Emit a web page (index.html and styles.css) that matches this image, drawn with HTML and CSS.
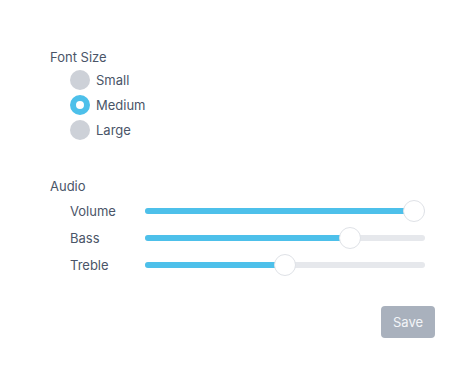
FILE: index.html
```html
<!DOCTYPE html>
<html>
<head>
<meta charset="utf-8">
<link rel="stylesheet" href="styles.css">
</head>
<body>
<div class="page">
  <section class="group">
    <div class="group-title">Font Size</div>
    <div class="radios">
      <div class="radio-row"><span class="radio"></span><span class="label">Small</span></div>
      <div class="radio-row"><span class="radio checked"></span><span class="label">Medium</span></div>
      <div class="radio-row"><span class="radio"></span><span class="label">Large</span></div>
    </div>
  </section>
  <section class="group audio">
    <div class="group-title">Audio</div>
    <div class="sliders">
      <div class="slider-row">
        <span class="slider-label">Volume</span>
        <div class="track"><div class="fill" style="width: 269px"></div><div class="thumb" style="left: 258px"></div></div>
      </div>
      <div class="slider-row">
        <span class="slider-label">Bass</span>
        <div class="track"><div class="fill" style="width: 205px"></div><div class="thumb" style="left: 194px"></div></div>
      </div>
      <div class="slider-row">
        <span class="slider-label">Treble</span>
        <div class="track"><div class="fill" style="width: 140px"></div><div class="thumb" style="left: 129px"></div></div>
      </div>
    </div>
  </section>
  <div class="actions"><button class="save">Save</button></div>
</div>
</body>
</html>
```
FILE: styles.css
```css
* { box-sizing: border-box; }
html, body { margin: 0; padding: 0; background: #fff; }
body {
  font-family: Inter, "Noto Sans", sans-serif;
  font-size: 13px;
  color: #4a5568;
}
.page {
  padding: 47px 40px 0 50px;
  width: 475px;
}
.group-title {
  line-height: 20px;
  font-size: 13px;
}
.radios {
  padding-left: 20px;
  display: flex;
  flex-direction: column;
}
.radio-row {
  height: 25px;
  display: flex;
  align-items: center;
  gap: 6px;
}
.radio {
  width: 20px;
  height: 20px;
  border-radius: 50%;
  background: #cdd1d8;
}
.radio.checked {
  background: #fff;
  border: 6px solid #4dc0ea;
}
.label { font-size: 13px; }
.audio { margin-top: 34px; }
.sliders {
  padding-left: 20px;
  display: flex;
  flex-direction: column;
  margin-top: 1px;
}
.slider-row {
  height: 27px;
  display: flex;
  align-items: center;
}
.slider-label {
  width: 75px;
  font-size: 13px;
}
.track {
  position: relative;
  width: 280px;
  height: 6px;
  border-radius: 3px;
  background: #e6e8ec;
}
.fill {
  height: 6px;
  border-radius: 3px;
  background: #4dc0ea;
}
.thumb {
  position: absolute;
  top: -8px;
  width: 22px;
  height: 22px;
  border-radius: 50%;
  background: #fff;
  border: 1px solid #dfe2e7;
}
.actions {
  display: flex;
  justify-content: flex-end;
  margin-top: 28px;
}
.save {
  width: 54px;
  height: 32px;
  border: none;
  border-radius: 4px;
  background: #a9b1bd;
  color: #f3f5f8;
  font-family: Inter, "Noto Sans", sans-serif;
  font-size: 13px;
  padding: 0;
}
```
